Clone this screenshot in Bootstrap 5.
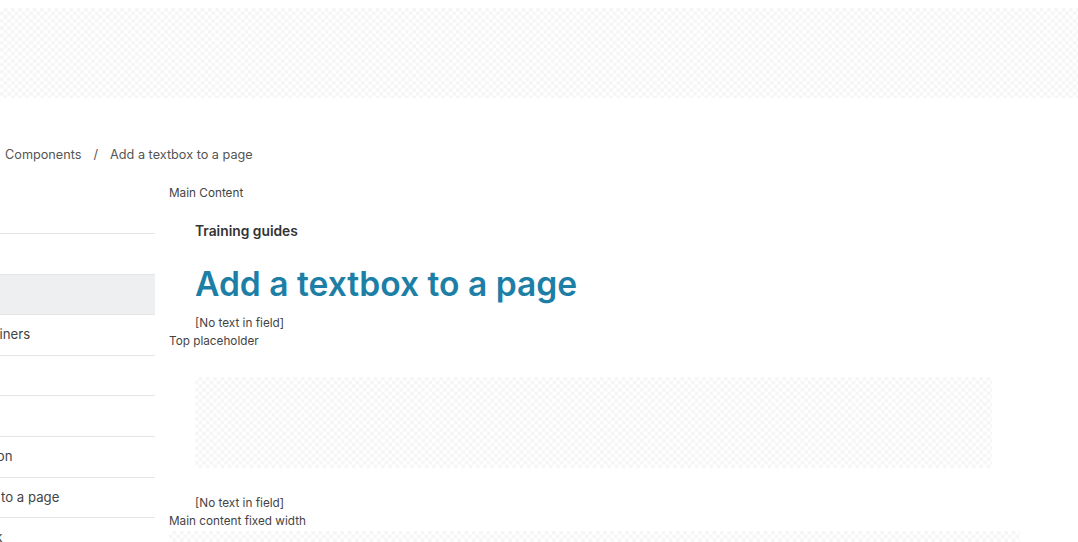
<!DOCTYPE html>
<html lang="en"><head><meta charset="utf-8"><title>Add a textbox to a page</title>
<link href="https://cdn.jsdelivr.net/npm/bootstrap@5.3.0/dist/css/bootstrap.min.css" rel="stylesheet">
<style>
html,body{height:542px;overflow:hidden}
body{font-family:Inter,"Liberation Sans",sans-serif;color:#444;font-size:12px;background:#fff}
.hatch{background-color:#fff;background-image:conic-gradient(#f6f6f6 25%,#fff 0 50%,#f6f6f6 0 75%,#fff 0);background-size:7.3px 7.3px}
.banner{height:90px;margin-top:8px}
.crumbs{margin:47px 0 0 5px;font-size:12.7px;line-height:20px;color:#555;gap:12px}
.shell{margin-top:19px;height:400px}
.side{width:155px;flex:none;overflow:hidden;margin-top:-20px;padding-top:29.4px}
.side-row{height:40.6px;border-bottom:1px solid #e4e5e7;font-size:13.2px;line-height:38.5px;color:#444;white-space:nowrap}
.side-row.on{background:#eeeff1}
.main-area{margin-left:14px;flex:1;min-width:0}
.lbl{line-height:18px;font-size:11.75px;color:#444}
.inner{padding-left:26px}
.kicker{font-size:13.8px;font-weight:600;color:#333;margin-top:19px;line-height:20px}
.ttl{font-size:33.6px;font-weight:600;color:#1d7fa6;line-height:42px;margin:22px 0 9px;padding:0}
.box2{height:91px;width:797px;margin:27px 0 26px}
.box3{height:20px;width:851px;margin-top:1px}
.off1{margin-left:-75px}.off3{margin-left:-54px}.off4{margin-left:-89px}.off5{margin-left:-59px}
</style></head><body>
<div class="banner hatch"></div>
<nav class="crumbs d-flex"><span>Components</span><span>/</span><span>Add a textbox to a page</span></nav>
<div class="shell d-flex">
<aside class="side">
<div class="side-row"></div>
<div class="side-row"></div>
<div class="side-row on"></div>
<div class="side-row"><span class="d-inline-block off1">Using containers</span></div>
<div class="side-row"></div>
<div class="side-row"></div>
<div class="side-row"><span class="d-inline-block off3">Navigation</span></div>
<div class="side-row"><span class="d-inline-block off4">Add a textbox to a page</span></div>
<div class="side-row"><span class="d-inline-block off5">Add a link</span></div>
</aside>
<main class="main-area">
<div class="lbl">Main Content</div>
<div class="inner">
<div class="kicker">Training guides</div>
<h1 class="ttl">Add a textbox to a page</h1>
<div class="lbl">[No text in field]</div>
</div>
<div class="lbl">Top placeholder</div>
<div class="inner">
<div class="box2 hatch"></div>
<div class="lbl">[No text in field]</div>
</div>
<div class="lbl">Main content fixed width</div>
<div class="box3 hatch"></div>
</main>
</div>
</body></html>
